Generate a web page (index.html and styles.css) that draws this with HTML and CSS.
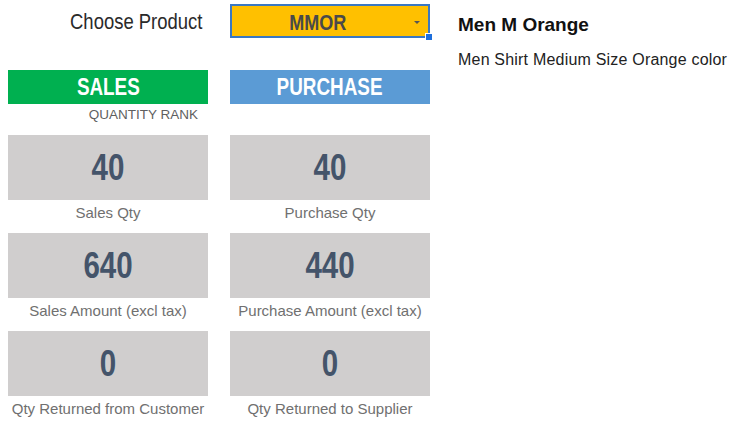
FILE: index.html
```html
<!DOCTYPE html>
<html>
<head>
<meta charset="utf-8">
<link rel="stylesheet" href="styles.css">
</head>
<body>
<div class="page">
  <div class="board">
    <div class="choose-label"><span class="narrow narrow-right">Choose Product</span></div>
    <div class="dropdown">
      <span class="dd-value narrow">MMOR</span>
      <span class="dd-arrow"></span>
      <span class="dd-handle"></span>
    </div>

    <div class="section">
      <div class="bar bar-sales"><span class="narrow">SALES</span></div>
      <div class="rank">QUANTITY RANK</div>
    </div>
    <div class="section">
      <div class="bar bar-purchase"><span class="narrow">PURCHASE</span></div>
      <div class="rank"></div>
    </div>

    <div class="metric">
      <div class="metric-box"><span class="narrow">40</span></div>
      <div class="metric-label">Sales Qty</div>
    </div>
    <div class="metric">
      <div class="metric-box"><span class="narrow">40</span></div>
      <div class="metric-label">Purchase Qty</div>
    </div>

    <div class="metric">
      <div class="metric-box"><span class="narrow">640</span></div>
      <div class="metric-label">Sales Amount (excl tax)</div>
    </div>
    <div class="metric">
      <div class="metric-box"><span class="narrow">440</span></div>
      <div class="metric-label">Purchase Amount (excl tax)</div>
    </div>

    <div class="metric">
      <div class="metric-box"><span class="narrow">0</span></div>
      <div class="metric-label">Qty Returned from Customer</div>
    </div>
    <div class="metric">
      <div class="metric-box"><span class="narrow">0</span></div>
      <div class="metric-label">Qty Returned to Supplier</div>
    </div>
  </div>

  <div class="info">
    <div class="info-title">Men M Orange</div>
    <div class="info-desc">Men Shirt Medium Size Orange color</div>
  </div>
</div>
</body>
</html>
```

FILE: styles.css
```css
html, body {
  margin: 0;
  padding: 0;
  background: #ffffff;
}

body {
  font-family: "Liberation Sans", Arial, sans-serif;
  width: 732px;
  height: 430px;
  overflow: hidden;
}

.narrow {
  display: inline-block;
  transform: scaleX(0.82);
  transform-origin: center;
}

.narrow-right {
  transform-origin: right center;
}

.page {
  display: flex;
  gap: 28px;
  padding: 4px 0 0 8px;
}

.board {
  display: grid;
  grid-template-columns: 200px 200px;
  column-gap: 22px;
  align-content: start;
}

.choose-label {
  font-size: 22.5px;
  color: #2a2a2a;
  text-align: right;
  padding-right: 6px;
  line-height: 36px;
  height: 34px;
}

.dropdown {
  position: relative;
  box-sizing: border-box;
  height: 34px;
  background: #ffc000;
  border: 2px solid #3a78c3;
  display: flex;
  align-items: center;
  justify-content: center;
  padding-right: 24px;
}

.dd-value {
  font-weight: bold;
  font-size: 22px;
  color: #4a4a4a;
  line-height: 1;
  margin-top: 3px;
}

.dd-arrow {
  position: absolute;
  right: 8px;
  top: 15px;
  width: 0;
  height: 0;
  border-left: 3px solid transparent;
  border-right: 3px solid transparent;
  border-top: 3px solid #555555;
}

.dd-handle {
  position: absolute;
  right: -5px;
  bottom: -5px;
  width: 6px;
  height: 6px;
  background: #1e6fdc;
  border: 1px solid #ffffff;
}

.section {
  margin-top: 32px;
  height: 65px;
}

.bar {
  height: 34px;
  display: flex;
  align-items: center;
  justify-content: center;
  font-weight: bold;
  font-size: 23px;
  color: #ffffff;
}

.bar-sales {
  background: #00b050;
}

.bar-purchase {
  background: #5b9bd5;
}

.rank {
  text-align: right;
  padding-right: 10px;
  font-size: 13.5px;
  color: #5f5f5f;
  line-height: 22px;
}

.metric {
  display: flex;
  flex-direction: column;
}

.metric-box {
  height: 65px;
  background: #d0cece;
  display: flex;
  align-items: center;
  justify-content: center;
  font-weight: bold;
  font-size: 36px;
  color: #44546a;
}

.metric-label {
  height: 33px;
  line-height: 26px;
  text-align: center;
  font-size: 15px;
  color: #707070;
  white-space: nowrap;
}

.info {
  padding-top: 10px;
}

.info-title {
  font-weight: bold;
  font-size: 19px;
  color: #111111;
  line-height: 22px;
}

.info-desc {
  margin-top: 14px;
  font-size: 16px;
  letter-spacing: 0.2px;
  color: #222222;
  line-height: 20px;
}
```
